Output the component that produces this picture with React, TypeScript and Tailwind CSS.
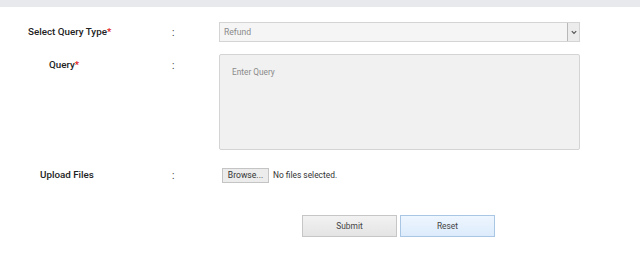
import React from "react";

export default function App() {
  return (
    <div className="w-[640px] h-[278px] bg-white overflow-hidden" style={{ fontFamily: "Roboto, 'Liberation Sans', sans-serif" }}>
      <div className="h-[7px] bg-[#e8e9ed]" />
      {/* Row 1 */}
      <div className="flex items-center mt-[15px] h-[20px]">
        <div className="w-[172px] pl-[28px] text-[9.8px] font-medium text-[#222]">
          Select Query Type<span className="text-[#e02020]">*</span>
        </div>
        <div className="w-[47px] text-[10px] text-[#333]">:</div>
        <div className="w-[361px] h-[20px] flex border border-[#d4d4d4] bg-[#f5f5f5]">
          <div className="flex-1 flex items-center pl-[4px] pt-[1px] text-[8.6px] text-[#8a8a8a]">Refund</div>
          <div className="w-[12px] h-[18px] border-l border-[#b8b8b8] bg-[#ececec] flex items-center justify-center">
            <svg width="6" height="5" viewBox="0 0 6 5">
              <path d="M0.8 1.2 L3 3.5 L5.2 1.2" stroke="#555" strokeWidth="1.2" fill="none" />
            </svg>
          </div>
        </div>
      </div>
      {/* Row 2 */}
      <div className="flex mt-[12px]">
        <div className="w-[172px] pl-[49px] pt-[4px] text-[9.8px] font-medium text-[#222]">
          Query<span className="text-[#e02020]">*</span>
        </div>
        <div className="w-[47px] pt-[4px] text-[10px] text-[#333]">:</div>
        <div className="w-[361px] h-[96px] border border-[#d4d4d4] rounded-[2px] bg-[#f1f1f1] pl-[12px] pt-[11px] text-[8.3px] text-[#8a8a8a]">
          Enter Query
        </div>
      </div>
      {/* Row 3 */}
      <div className="flex items-center mt-[18px] h-[15px]">
        <div className="w-[172px] pl-[40px] text-[9.8px] font-medium text-[#222]">Upload Files</div>
        <div className="w-[50px] text-[10px] text-[#333]">:</div>
        <div className="w-[47px] h-[15px] border border-[#c4c4c4] bg-[#ececec] flex items-center justify-center text-[8.6px] text-[#333]">
          Browse...
        </div>
        <div className="ml-[4px] text-[8.4px] text-[#333]">No files selected.</div>
      </div>
      {/* Row 4 */}
      <div className="flex mt-[32px] pl-[302px] gap-[3px]">
        <div className="w-[95px] h-[22px] border border-[#c6c6c6] bg-[linear-gradient(#f2f2f2,#e4e4e4)] flex items-center justify-center text-[8.4px] text-[#444]">
          Submit
        </div>
        <div className="w-[95px] h-[22px] border border-[#a9c6e4] bg-[linear-gradient(#eef6ff,#dcebfb)] flex items-center justify-center text-[8.4px] text-[#444]">
          Reset
        </div>
      </div>
    </div>
  );
}
